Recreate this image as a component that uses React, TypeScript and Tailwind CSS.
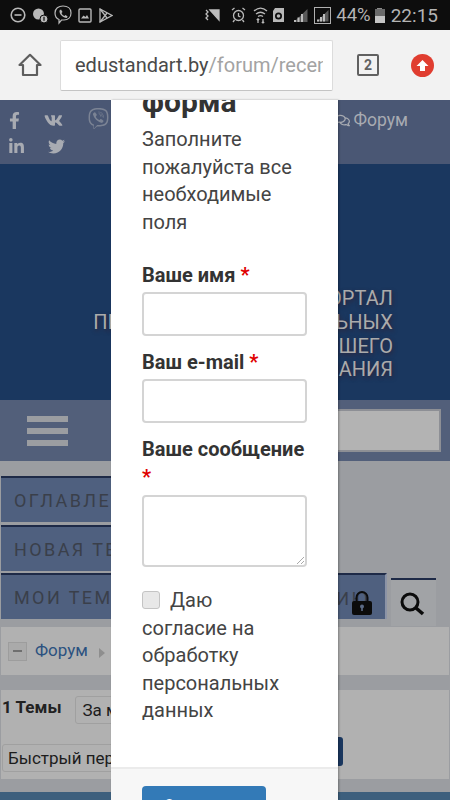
import { FaFacebookF, FaVk, FaLinkedinIn, FaTwitter, FaViber, FaRegComments } from "react-icons/fa";

function StatusLeft() {
  return (
    <div className="flex items-center gap-[6px] pl-[10px]">
      <svg width="16" height="16" viewBox="0 0 16 16" fill="none" stroke="#b8b8b8" strokeWidth="1.6"><circle cx="8" cy="8" r="6.8" /><path d="M4.5 8h7" /></svg>
      <svg width="16" height="16" viewBox="0 0 16 16" fill="#b8b8b8"><circle cx="6.5" cy="7" r="5.5" /><circle cx="12" cy="12" r="4" stroke="#0d0d0d" /><rect x="11.4" y="9.8" width="1.2" height="4" fill="#0d0d0d" /></svg>
      <svg width="18" height="20" viewBox="0 0 18 20" fill="none" stroke="#b8b8b8" strokeWidth="1.2"><path d="M9 1c4.5 0 8 2.5 8 7s-3 7-7 7c-1 0-2 0-2.500 0L5 18v-3.500C2.500 13.500 1 11.500 1 8c0-4.500 3.500-7 8-7z" /><path d="M5.500 5.500l1.500-1 1.500 2.500-1 1c.5 1.500 1.500 2.500 3 3l1-1 2.200 1.500-1 1.500C9 13 5 9 5.500 5.500z" fill="#b8b8b8" stroke="none" /></svg>
      <svg width="14" height="15" viewBox="0 0 14 15" fill="none" stroke="#b8b8b8" strokeWidth="1.4"><rect x="1" y="1" width="12" height="13" rx="1" /><path d="M3 10.500l2.500-3 2 1.500 1.500-2 2 3.500z" fill="#b8b8b8" stroke="none" /></svg>
      <svg width="14" height="15" viewBox="0 0 14 15" fill="none" stroke="#b8b8b8" strokeWidth="1.3" className="ml-[1px]"><path d="M1 1v13l12-6.500z" /><path d="M1 1l7 9M1 14l7-9" /></svg>
    </div>
  );
}

function StatusRight() {
  return (
    <div className="ml-auto flex items-center pr-[12px] text-[#b4b4b4]">
      <svg width="16" height="16" viewBox="0 0 16 16" className="mr-[11px]" fill="none" stroke="#bdbdbd" strokeWidth="1.3"><path d="M2 3l2 2-2 2 2 2-2 2 2 2" /><path d="M6 3l9 10V3z" fill="#bdbdbd" /></svg>
      <svg width="15" height="16" viewBox="0 0 15 16" className="mr-[7px]" fill="none" stroke="#b8b8b8" strokeWidth="1.300"><circle cx="7.500" cy="8.500" r="5" /><path d="M7.500 6v3l2 1M1 3l2.500-2M14 3l-2.500-2M3.500 13L2 15M11.500 13l1.500 2" /></svg>
      <svg width="15" height="18" viewBox="0 0 15 18" className="mr-[4px]" fill="none" stroke="#b8b8b8" strokeWidth="1.300"><path d="M1 5c4-3.500 9-3.500 13 0M3 8c3-2.300 6-2.300 9 0M5 10.500c2-1.300 3-1.300 5 0" /><path d="M5 17v-4M3.800 14l1.200-1.200L6.200 14M10 13v4M8.800 16l1.200 1 1.200-1" /></svg>
      <svg width="13" height="16" viewBox="0 0 13 16" className="mr-[8px]" fill="#b8b8b8"><path d="M3 1h9v14H1V4z" /><circle cx="6.500" cy="9" r="3.500" fill="#0d0d0d" /><circle cx="6.500" cy="9" r="1.800" /></svg>
      <svg width="15" height="15" viewBox="0 0 15 15" className="mr-[6px]"><path d="M14.500 1v13H1z" fill="#5a5a5a" /><path d="M1 14h2v-2H1zM4.500 14h2V9.500h-2zM8 14h2V6H8z" fill="#bdbdbd" /></svg>
      <div className="mr-[5px] flex h-[17px] w-[17px] items-end justify-center border border-[#b0b0b0] pb-[1px]">
        <svg width="13" height="13" viewBox="0 0 13 13"><path d="M12.500 1v11.500H1z" fill="#5a5a5a" /><path d="M1 12.500h2v-2H1zM4 12.500h2V8H4zM7 12.500h2V5H7z" fill="#bdbdbd" /></svg>
      </div>
      <span className="text-[18.5px] leading-none">44%</span>
      <div className="ml-[4px] mr-[6px] flex h-[15px] w-[10px] flex-col">
        <div className="mx-auto h-[1px] w-[5px] bg-[#8a8a8a]" />
        <div className="h-[7px] w-full bg-[#6a6a6a]" />
        <div className="h-[7px] w-full bg-[#c4c4c4]" />
      </div>
      <span className="text-[19px] leading-none">22:15</span>
    </div>
  );
}

function BrowserBar() {
  return (
    <div className="flex h-[70px] shrink-0 items-center bg-[#f2f2f2] pl-[18px]">
      <svg width="24" height="24" viewBox="0 0 24 24" fill="none" stroke="#5e5e5e" strokeWidth="2.200" strokeLinejoin="round"><path d="M1.500 12L12 1.800 22.500 12H19v10H5V12z" /></svg>
      <div className="ml-[18px] flex h-[51px] w-[273px] items-center overflow-hidden rounded-[2px] border border-[#dcdcdc] border-b-[#c4c4c4] bg-white pl-[14px] pr-[9px] text-[20px]">
        <span className="overflow-hidden whitespace-nowrap">
          <span className="text-[#4a4a4a]">edustandart.by</span>
          <span className="text-[#a3a3a3]">/forum/recent</span>
        </span>
      </div>
      <div className="ml-[24px] flex h-[22px] w-[22px] items-center justify-center rounded-[2px] border-2 border-[#616161] text-[14px] font-bold text-[#616161]">2</div>
      <div className="ml-[32px] flex h-[23px] w-[23px] items-center justify-center rounded-full bg-[#e03d30]">
        <svg width="13" height="13" viewBox="0 0 13 13" fill="white"><path d="M6.500 1L12.500 7H9v5H4V7H.5z" /></svg>
      </div>
    </div>
  );
}

function TopNav() {
  return (
    <div className="flex h-[64px] shrink-0 items-start justify-between bg-[#4a5774] text-[#a8abb2]">
      <div className="grid grid-cols-[39px_44px_20px] items-center pl-[5px] pt-[11px]">
        <FaFacebookF size={17} className="ml-[1px]" />
        <FaVk size={19} />
        <FaViber size={21} className="-mt-[4px] text-[#7b8394]" />
        <FaLinkedinIn size={17} className="mt-[8px] ml-[3px]" />
        <FaTwitter size={17} className="mt-[8px] ml-[4px]" />
      </div>
      <div className="flex items-center gap-[4px] pr-[42px] pt-[10px] text-[17.5px] leading-[20px]">
        <FaRegComments size={15} />
        <span>Форум</span>
      </div>
    </div>
  );
}

function Hero() {
  return (
    <div className="flex h-[236px] shrink-0 flex-col items-end justify-end bg-[#1a375f] pb-[18px] pr-[57px] text-right text-[20px] uppercase leading-[23.7px] text-[#ababab] [text-shadow:1px_2px_4px_#2f2438]">
      <div>Интернет-портал</div>
      <div className="whitespace-nowrap tracking-[0.2px]">Предметных специальных</div>
      <div>дисциплин высшего</div>
      <div>образования</div>
    </div>
  );
}

function SearchBand() {
  return (
    <div className="flex h-[61px] shrink-0 items-center justify-between bg-[#525f7a] pl-[27px] pr-[9px]">
      <div className="flex w-[41px] flex-col gap-[6px]">
        <div className="h-[6px] bg-[#9b9da1]" />
        <div className="h-[6px] bg-[#9b9da1]" />
        <div className="h-[6px] bg-[#9b9da1]" />
      </div>
      <div className="h-[43px] w-[200px] border-2 border-[#8d8f95] bg-[#b3b3b3]" />
    </div>
  );
}

function Tabs() {
  const tab = "flex h-[46px] items-center border-t-2 border-[#1e2a47] bg-[#4f607f] pl-[13px] text-[18px] uppercase tracking-[2.4px] text-[#3a3f4a] whitespace-nowrap overflow-hidden";
  return (
    <div className="flex shrink-0 flex-col gap-[3px] bg-[#9b9da1] pl-[1px] pr-[14px] pt-[15px]">
      <div className={`${tab} w-[240px]`}>Оглавление</div>
      <div className={`${tab} w-[240px]`}>Новая тема</div>
      <div className="-mt-[1px] flex items-start justify-between">
        <div className={`${tab} relative w-[386px] border-r-2 border-r-[#8b93a6]`}>
          Мои темы
          <span className="absolute right-[15px] top-[10px] flex text-[#3a3f4a]">Ию</span>
          <svg width="22" height="26" viewBox="0 0 22 26" className="absolute right-[12px] top-[15px]">
            <path d="M5.500 12V7.500a5.500 5.500 0 0 1 11 0V12" fill="none" stroke="#0b0b0b" strokeWidth="2" />
            <rect x="1" y="11" width="20" height="14" rx="2" fill="#0b0b0b" />
            <circle cx="11" cy="16.500" r="2" fill="#5b6a85" />
            <rect x="10.200" y="17" width="1.600" height="4" fill="#5b6a85" />
          </svg>
        </div>
        <div className="mt-[5px] flex h-[48px] w-[45px] items-center justify-center border-t-2 border-[#1e2a47] bg-[#a1a3a6]">
          <svg width="26" height="26" viewBox="0 0 26 26" className="-ml-[3px] mt-[1px]" fill="none" stroke="#0b0b0b" strokeWidth="3"><circle cx="11" cy="11" r="8" /><path d="M17 17l7 6" strokeWidth="3.600" /></svg>
        </div>
      </div>
    </div>
  );
}

function PageBody() {
  return (
    <div className="flex flex-1 flex-col bg-[#9b9da1] pt-[1px]">
      <div className="mx-[1px] flex h-[48px] shrink-0 items-center bg-[#b1b1b1] pl-[7px]">
        <div className="flex h-[19px] w-[19px] items-center justify-center border border-[#9d9d9d] bg-[#aaaaaa]">
          <div className="h-[2px] w-[9px] bg-[#6f6f6f]" />
        </div>
        <span className="ml-[8px] text-[17px] text-[#2b5180]">Форум</span>
        <svg width="6" height="10" viewBox="0 0 6 10" className="ml-[11px] mt-[3px]"><path d="M0 0l6 5-6 5z" fill="#8e8e8e" /></svg>
      </div>
      <div className="mx-[1px] mt-[15px] h-[89px] shrink-0 bg-[#b1b1b1] pt-[6px]">
        <div className="flex items-start">
          <span className="ml-[1px] mt-[1px] text-[17px] font-bold leading-[20px] text-[#222]">1 Темы</span>
          <div className="ml-[14px] h-[28px] w-[120px] overflow-hidden whitespace-nowrap rounded-[3px] border border-[#a0a0a0] pl-[6px] text-[17px] leading-[27px] text-[#1c1c1c]">За месяц</div>
        </div>
        <div className="relative mt-[20px] flex items-start">
          <div className="ml-[1px] h-[28px] w-[300px] overflow-hidden whitespace-nowrap rounded-[3px] border border-[#a0a0a0] pl-[5px] text-[17px] leading-[26px] text-[#1c1c1c]">Быстрый переход</div>
          <div className="absolute left-[300px] -top-[7px] h-[29px] w-[42px] rounded-[3px] bg-[#1a375f]" />
        </div>
      </div>
      <div className="mt-[13px] h-[8px] shrink-0 bg-[#3d5f7d]" />
    </div>
  );
}

function Modal() {
  const label = "text-[20px] font-bold leading-[27.5px] text-[#333]";
  const star = <span className="text-[#e00000]"> *</span>;
  const input = "block h-[44px] w-[165px] rounded-[4px] border-2 border-[#d4d4d4] bg-white";
  return (
    <div className="absolute bottom-0 left-[111px] top-[100px] flex w-[227px] flex-col overflow-hidden bg-white shadow-[1px_0_2px_rgba(0,0,0,0.3)]">
      <div className="flex-1 px-[31px]">
        <div className="-mt-[13px] text-[30px] font-bold leading-[30px] text-[#333]">форма</div>
        <p className="mt-[9px] text-[20px] leading-[27.5px] text-[#444]">Заполните пожалуйста все необходимые поля</p>
        <div className={`${label} mt-[26px]`}>Ваше имя{star}</div>
        <div className={`${input} mt-[2px]`} />
        <div className={`${label} mt-[13px]`}>Ваш e-mail{star}</div>
        <div className={`${input} mt-[3px]`} />
        <div className={`${label} mt-[13px]`}>Ваше сообщение{star}</div>
        <div className="relative mt-[4px] h-[72px] w-[165px] rounded-[4px] border-2 border-[#d4d4d4]">
          <svg width="9" height="9" viewBox="0 0 9 9" className="absolute bottom-0 right-0" stroke="#aaa"><path d="M1 8l7-7M5 8l3-3" /></svg>
        </div>
        <div className="mt-[20px] text-[20px] leading-[27.5px] text-[#444]">
          <span className="mr-[10px] inline-block h-[18px] w-[18px] translate-y-[2px] rounded-[3px] border border-[#c4c4c4] bg-[#e8e8e8]" />
          Даю
          <br />
          согласие на обработку персональных данных
        </div>
      </div>
      <div className="h-[33px] border-t-2 border-[#ebebeb] bg-[#f7f7f7] pl-[31px] pt-[17px]">
        <div className="h-[40px] w-[124px] rounded-[4px] bg-[#337ab7] pt-[8px] text-center text-[16px] font-medium text-white">Отправить</div>
      </div>
    </div>
  );
}

export default function App() {
  return (
    <div className="relative flex h-[800px] w-[450px] flex-col overflow-hidden font-[Roboto,sans-serif]">
      <div className="flex h-[30px] shrink-0 items-center bg-[#0d0d0d]">
        <StatusLeft />
        <StatusRight />
      </div>
      <BrowserBar />
      <TopNav />
      <Hero />
      <SearchBand />
      <Tabs />
      <PageBody />
      <Modal />
    </div>
  );
}
